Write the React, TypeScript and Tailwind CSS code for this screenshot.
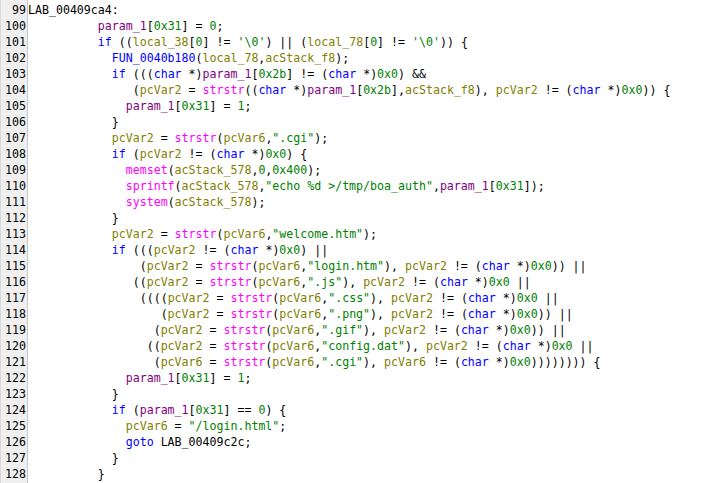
import React from "react";

const source = `LAB_00409ca4:
          param_1[0x31] = 0;
          if ((local_38[0] != '\\0') || (local_78[0] != '\\0')) {
            FUN_0040b180(local_78,acStack_f8);
            if (((char *)param_1[0x2b] != (char *)0x0) &&
               (pcVar2 = strstr((char *)param_1[0x2b],acStack_f8), pcVar2 != (char *)0x0)) {
              param_1[0x31] = 1;
            }
            pcVar2 = strstr(pcVar6,".cgi");
            if (pcVar2 != (char *)0x0) {
              memset(acStack_578,0,0x400);
              sprintf(acStack_578,"echo %d >/tmp/boa_auth",param_1[0x31]);
              system(acStack_578);
            }
            pcVar2 = strstr(pcVar6,"welcome.htm");
            if (((pcVar2 != (char *)0x0) ||
                (pcVar2 = strstr(pcVar6,"login.htm"), pcVar2 != (char *)0x0)) ||
               ((pcVar2 = strstr(pcVar6,".js"), pcVar2 != (char *)0x0 ||
                ((((pcVar2 = strstr(pcVar6,".css"), pcVar2 != (char *)0x0 ||
                   (pcVar2 = strstr(pcVar6,".png"), pcVar2 != (char *)0x0)) ||
                  (pcVar2 = strstr(pcVar6,".gif"), pcVar2 != (char *)0x0)) ||
                 ((pcVar2 = strstr(pcVar6,"config.dat"), pcVar2 != (char *)0x0 ||
                  (pcVar6 = strstr(pcVar6,".cgi"), pcVar6 != (char *)0x0)))))))) {
              param_1[0x31] = 1;
            }
            if (param_1[0x31] == 0) {
              pcVar6 = "/login.html";
              goto LAB_00409c2c;
            }
          }`;

const colors: Record<string, string> = {
  keyword: "text-[#0000ff]",
  func: "text-[#0000ff]",
  lib: "text-[#ff00ff]",
  param: "text-[#800080]",
  variable: "text-[#808000]",
  constant: "text-[#008000]",
  plain: "text-black",
};

const keywords = ["if", "char", "goto"];
const libs = ["strstr", "memset", "sprintf", "system"];

function kindOf(tok: string) {
  if (/^["']/.test(tok) || /^\d/.test(tok)) return "constant";
  if (keywords.includes(tok)) return "keyword";
  if (libs.includes(tok)) return "lib";
  if (tok.startsWith("FUN_")) return "func";
  if (tok === "param_1") return "param";
  if (tok.startsWith("LAB_")) return "plain";
  if (/^[A-Za-z_]/.test(tok)) return "variable";
  return "plain";
}

function CodeLine({ text }: { text: string }) {
  const tokens = text.match(/"(?:[^"\\]|\\.)*"|'(?:[^'\\]|\\.)*'|0x[0-9a-fA-F]+|\d+|[A-Za-z_][A-Za-z0-9_]*|\s+|./g) || [];
  return (
    <div className="h-4 leading-4 whitespace-pre">
      {tokens.map((t, i) => (
        <span key={i} className={colors[kindOf(t)]}>
          {t}
        </span>
      ))}
    </div>
  );
}

export default function App() {
  const lines = source.split("\n");

  return (
    <div className="flex min-h-screen bg-white font-['DejaVu_Sans_Mono',monospace] text-[11.6px] text-black">
      <div className="w-[28px] shrink-0 bg-[#efefef] border-l border-l-[#d8d8d8] border-r border-r-[#c8c8c8] pt-[2px] pr-[1px] text-right">
        {lines.map((_, i) => (
          <div key={i} className="h-4 leading-4">
            {99 + i}
          </div>
        ))}
      </div>
      <div className="flex-1 pt-[2px]">
        {lines.map((l, i) => (
          <CodeLine key={i} text={l} />
        ))}
      </div>
    </div>
  );
}
